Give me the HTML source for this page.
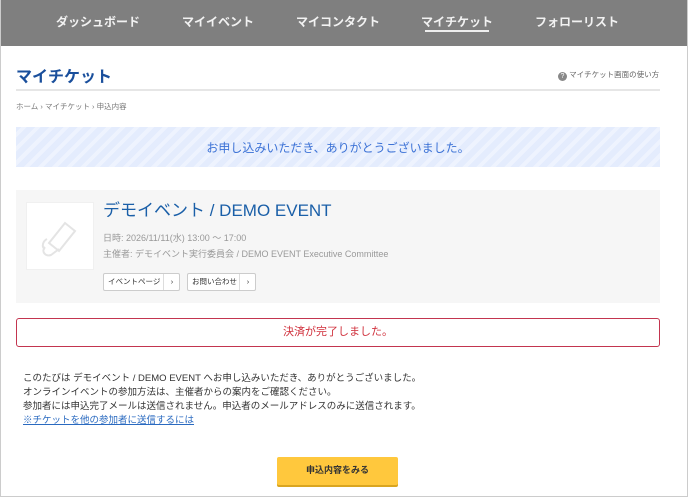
<!DOCTYPE html>
<html><head><meta charset="utf-8"><style>
*{margin:0;padding:0;box-sizing:border-box}
body{width:688px;height:497px;overflow:hidden;background:#fff;font-family:"Liberation Sans","Noto Sans CJK JP",sans-serif;position:relative}
.frame{position:absolute;left:0;top:0;width:688px;height:497px;border:1px solid #ccc;border-top:none}
.nav{position:absolute;left:0;top:0;width:688px;height:46px;background:#7f7f7f}
.nav span{position:absolute;top:13px;font-size:12px;font-weight:bold;color:#f2f2f2;transform:translateX(-50%);white-space:nowrap}
.ul{position:absolute;left:425px;top:30px;width:64px;height:2px;background:#eee}
.a{position:absolute;white-space:nowrap}
</style></head><body>
<div class="nav">
<span style="left:98px">ダッシュボード</span>
<span style="left:218px">マイイベント</span>
<span style="left:338px">マイコンタクト</span>
<span style="left:457px">マイチケット</span>
<span style="left:577px">フォローリスト</span>
<div class="ul"></div>
</div>
<div class="a" style="left:16px;top:63px;font-size:16px;font-weight:bold;color:#1a4f9c">マイチケット</div>
<div class="a" style="left:558px;top:69px;font-size:7.5px;color:#666"><span style="display:inline-block;width:9px;height:9px;border-radius:50%;background:#888;color:#fff;font-size:7px;text-align:center;line-height:9px;vertical-align:-1px">?</span> マイチケット画面の使い方</div>
<div class="a" style="left:16px;top:89px;width:644px;height:2px;background:#e6e6e6"></div>
<div class="a" style="left:16px;top:101px;font-size:7.5px;color:#777">ホーム › マイチケット › 申込内容</div>
<div class="a" style="left:16px;top:127px;width:644px;height:40px;background:repeating-linear-gradient(-45deg,#e4ecfd 0 6px,#eef3fe 6px 10px)"></div>
<div class="a" style="left:16px;top:139px;width:644px;text-align:center;font-size:12px;color:#3c72d6">お申し込みいただき、ありがとうございました。</div>
<div class="a" style="left:16px;top:190px;width:644px;height:113px;background:#f6f6f6"></div>
<div class="a" style="left:26px;top:202px;width:68px;height:68px;background:#fff;border:1px solid #f0f0f0">
<svg width="68" height="68" viewBox="0 0 68 68"><g fill="none" stroke="#e4e4e4" stroke-width="2"><path d="M22 40l16-20 10 8-16 20z"/><path d="M18 44c-4 4 0 10 6 8l8-6"/><path d="M20 36c-4 2-6 8-2 10"/></g></svg></div>
<div class="a" style="left:103px;top:196px;font-size:17px;color:#1a5fa8">デモイベント / DEMO EVENT</div>
<div class="a" style="left:103px;top:231px;font-size:9px;color:#999">日時: 2026/11/11(水) 13:00 ～ 17:00</div>
<div class="a" style="left:103px;top:247px;font-size:9px;color:#999">主催者: デモイベント実行委員会 / DEMO EVENT Executive Committee</div>
<div class="a" style="left:103px;top:273px;width:77px;height:18px;background:#fff;border:1px solid #ccc;border-radius:2px;font-size:7.5px;color:#333;line-height:16px;padding-left:4px">イベントページ<span style="position:absolute;left:59px;top:0;height:16px;border-left:1px solid #ddd;width:17px;text-align:center">›</span></div>
<div class="a" style="left:187px;top:273px;width:69px;height:18px;background:#fff;border:1px solid #ccc;border-radius:2px;font-size:7.5px;color:#333;line-height:16px;padding-left:4px">お問い合わせ<span style="position:absolute;left:51px;top:0;height:16px;border-left:1px solid #ddd;width:17px;text-align:center">›</span></div>
<div class="a" style="left:16px;top:318px;width:644px;height:29px;border:1px solid #c3354f;border-radius:3px;text-align:center;line-height:27px;font-size:11px;color:#d0303c">決済が完了しました。</div>
<div class="a" style="left:23px;top:372px;font-size:9.5px;color:#333;line-height:14px">このたびは デモイベント / DEMO EVENT へお申し込みいただき、ありがとうございました。<br>オンラインイベントの参加方法は、主催者からの案内をご確認ください。<br>参加者には申込完了メールは送信されません。申込者のメールアドレスのみに送信されます。<br><span style="color:#2a6ac0;text-decoration:underline">※チケットを他の参加者に送信するには</span></div>
<div class="a" style="left:277px;top:457px;width:121px;height:28px;background:#ffc83d;border-radius:2px;box-shadow:0 2px 0 #d9a520;text-align:center;line-height:27px;font-size:9px;font-weight:bold;color:#333">申込内容をみる</div>
<div class="frame"></div>
</body></html>
